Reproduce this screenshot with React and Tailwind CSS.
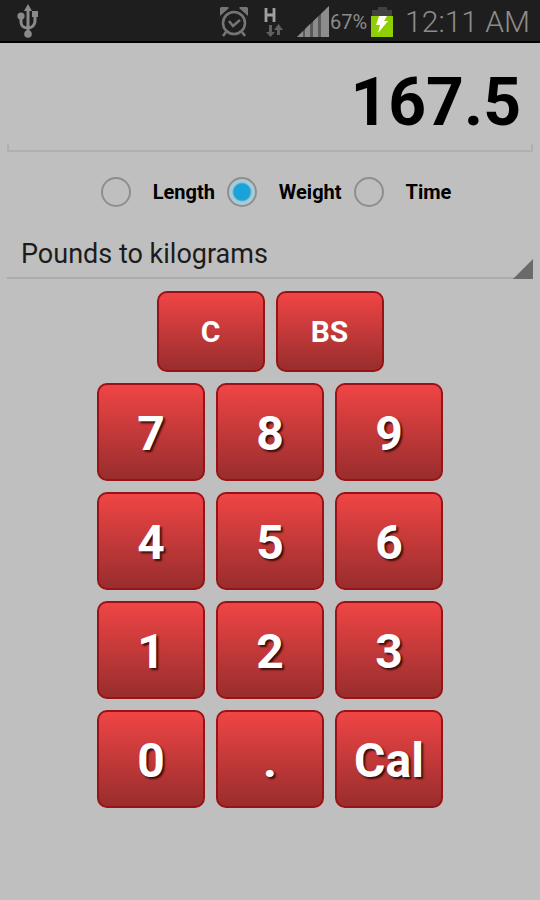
import React, { useState } from 'react';

const UNITS = ['Length', 'Weight', 'Time'];

const CONVERSIONS = {
  Length: ['Inches to centimeters', 'Miles to kilometers'],
  Weight: ['Pounds to kilograms', 'Kilograms to pounds'],
  Time: ['Minutes to seconds', 'Hours to minutes'],
};

const FACTORS = {
  'Inches to centimeters': 2.54,
  'Miles to kilometers': 1.609344,
  'Pounds to kilograms': 0.45359237,
  'Kilograms to pounds': 2.20462262,
  'Minutes to seconds': 60,
  'Hours to minutes': 60,
};

const KEYS = ['7', '8', '9', '4', '5', '6', '1', '2', '3', '0', '.', 'Cal'];

const UsbIcon = () => (
  <svg width="24" height="36" viewBox="0 0 24 36" fill="none" stroke="#8a8a8a" strokeWidth="3">
    <path d="M12 6v26M5 14v5c0 4 3 6 7 6M19 13v5c0 4-3 7-7 7" />
    <path d="M12 1l4 7H8z" fill="#8a8a8a" stroke="none" />
    <circle cx="5" cy="13" r="3.6" fill="#8a8a8a" stroke="none" />
    <path d="M16 8h6v6h-6z" fill="#8a8a8a" stroke="none" />
    <circle cx="12" cy="31" r="3.8" fill="#8a8a8a" stroke="none" />
  </svg>
);

const AlarmIcon = () => (
  <svg width="28" height="30" viewBox="0 0 28 30" fill="none" stroke="#757575" strokeWidth="2.6">
    <circle cx="14" cy="16" r="11" />
    <path d="M9 14l4 5 7-6" />
    <path d="M6 25l-3 4M22 25l3 4" />
    <path d="M0 9a6 6 0 0 1 9-8zM28 9a6 6 0 0 0-9-8z" fill="#757575" stroke="none" />
  </svg>
);

const DataIcon = () => (
  <svg width="20" height="30" viewBox="0 0 20 30" fill="none">
    <path d="M2 1v14M10 1v14M2 8h8" stroke="#a0a0a0" strokeWidth="2.8" />
    <path d="M5 18v7H2l4.500 5 4.500-5H8v-7zM13 28v-5h-3l4.500-6 4.500 6h-3v5z" fill="#606060" />
  </svg>
);

const SignalIcon = () => (
  <svg width="34" height="32" viewBox="0 0 34 32">
    <path d="M1 31L33 0v31z" fill="#5a5a5a" />
    <path d="M1 31l6-6v6zM9 23l5-5v13H9zM17 15.500l5-5V31h-5zM25 8l8-8v31h-8z" fill="#8c8c8c" />
  </svg>
);

const BatteryIcon = () => (
  <svg width="22" height="32" viewBox="0 0 22 32">
    <path d="M7 1h9v3h5v6H1V4h6z" fill="#414141" />
    <path d="M0 10h22v21H0z" fill="#8fce00" />
    <path d="M8 10h8l-3 5h4L7 27l2-8H5z" fill="#fff" />
  </svg>
);

function StatusBar() {
  return (
    <header className="flex h-[43px] items-center border-b-2 border-black bg-[#1e1e1e] pl-4 pr-2.5 text-[#8c8c8c]">
      <UsbIcon />
      <div className="ml-auto flex items-center pt-0.5">
        <AlarmIcon />
        <span className="ml-4"><DataIcon /></span>
        <span className="ml-3"><SignalIcon /></span>
        <span className="text-[20px]">67%</span>
        <span className="ml-1"><BatteryIcon /></span>
        <span className="ml-3 text-[30px] font-light leading-none">12:11 AM</span>
      </div>
    </header>
  );
}

function Key({ label, small, onPress }) {
  return (
    <button
      type="button"
      onClick={() => onPress(label)}
      className={`w-[108px] rounded-[10px] border-2 border-[#991216] bg-linear-to-b from-[#f04545] to-[#992d2d] font-bold text-white active:brightness-90 ${
        small ? 'h-[81px] text-[30px]' : 'h-[98px] pt-1 text-[48px] [text-shadow:2px_2px_2px_#3a0c0c]'
      }`}
    >
      {label}
    </button>
  );
}

export default function App() {
  const [value, setValue] = useState('167.5');
  const [unit, setUnit] = useState('Weight');
  const [conversion, setConversion] = useState('Pounds to kilograms');

  const changeUnit = (next) => {
    setUnit(next);
    setConversion(CONVERSIONS[next][0]);
  };

  const press = (key) => {
    if (key === 'C') return setValue('');
    if (key === 'BS') return setValue(value.slice(0, -1));
    if (key === 'Cal') return setValue(String(+(Number(value) * FACTORS[conversion]).toFixed(4)));
    if (key === '.' && value.includes('.')) return;
    setValue(value + key);
  };

  return (
    <div className="min-h-screen bg-[#bfbfbf] font-[Roboto,sans-serif] text-black">
      <StatusBar />

      <main className="px-[7px]">
        <div className="relative pt-2.5">
          <input
            aria-label="Value"
            value={value}
            onChange={(e) => setValue(e.target.value)}
            className="block h-[99px] w-full border-b-2 border-[#b0b0b0] bg-transparent pr-3 pt-0.5 text-right text-[66px] font-bold outline-none"
          />
          <span className="absolute bottom-0 left-0 h-2 w-0.5 bg-[#b0b0b0]" />
          <span className="absolute bottom-0 right-0 h-2 w-0.5 bg-[#b0b0b0]" />
        </div>

        <div className="flex h-20 items-center justify-center pl-6">
          {UNITS.map((name) => (
            <label key={name} className="flex items-center pr-3 text-[20px] font-bold">
              <input
                type="radio"
                name="unit"
                checked={unit === name}
                onChange={() => changeUnit(name)}
                className="mr-[22px] size-[30px] appearance-none rounded-full border-2 border-[#8e8e8e] checked:bg-[radial-gradient(circle,#1ba3d9_0_8px,#a9cbd8_10px)]"
              />
              {name}
            </label>
          ))}
        </div>

        <div className="relative border-b-2 border-[#acacac]">
          <select
            aria-label="Conversion"
            value={conversion}
            onChange={(e) => setConversion(e.target.value)}
            className="block h-[45px] w-full appearance-none bg-transparent pl-3.5 text-[27px] text-[#1c1c1c] outline-none"
          >
            {CONVERSIONS[unit].map((c) => (
              <option key={c}>{c}</option>
            ))}
          </select>
          <svg className="pointer-events-none absolute -bottom-0.5 right-0" width="20" height="20" viewBox="0 0 20 20">
            <path d="M20 0v20H0z" fill="#6a6a6a" />
          </svg>
        </div>

        <div className="flex flex-col items-center gap-[11px] pb-4 pt-3">
          <div className="flex gap-[11px]">
            <Key label="C" small onPress={press} />
            <Key label="BS" small onPress={press} />
          </div>
          <div className="grid grid-cols-3 gap-[11px]">
            {KEYS.map((k) => (
              <Key key={k} label={k} onPress={press} />
            ))}
          </div>
        </div>
      </main>
    </div>
  );
}
